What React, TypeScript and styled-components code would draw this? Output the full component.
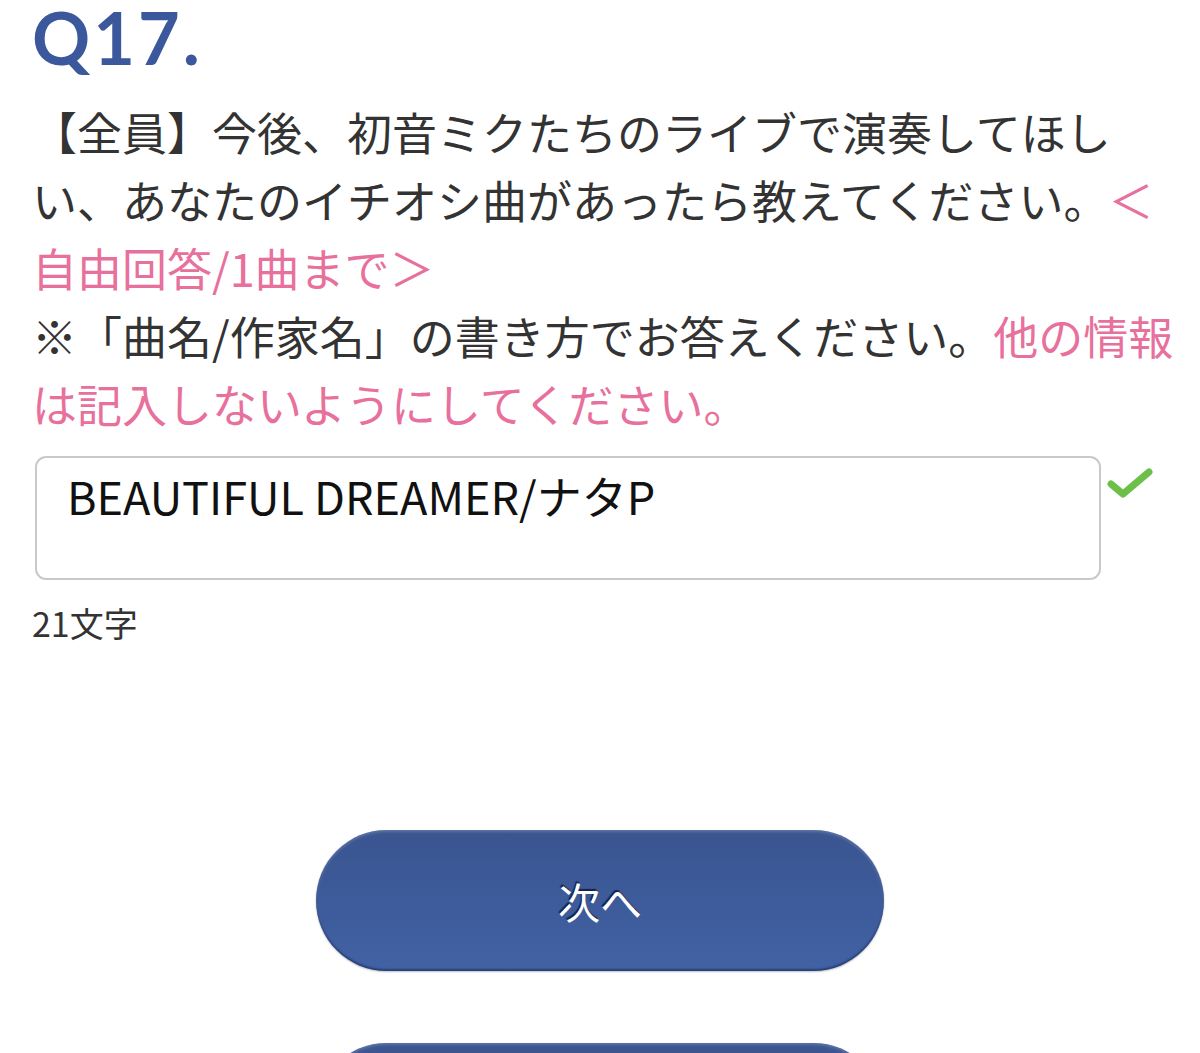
import React from 'react';
import styled, { createGlobalStyle } from 'styled-components';

const GlobalStyle = createGlobalStyle`
    html, body {
        margin: 0;
        padding: 0;
        background: #ffffff;
    }
    body {
        font-family: "Noto Sans CJK JP", "Noto Sans", sans-serif;
        color: #333333;
    }
`;

const Page = styled.div`
    width: 1200px;
    height: 1053px;
    overflow: hidden;
    box-sizing: border-box;
    padding: 0 8px 0 32px;
`;

const QuestionNo = styled.h1`
    margin: 0;
    padding-top: 0;
    height: 88px;
    font-family: Lato, "Open Sans", sans-serif;
    font-weight: 700;
    font-size: 72px;
    line-height: 74px;
    color: #3a589b;
    letter-spacing: 3px;
`;

const Question = styled.p`
    margin: 10px 0 0;
    font-size: 45px;
    line-height: 68px;
    font-weight: 400;
    color: #333333;
    line-break: strict;
`;

const Accent = styled.span`
    color: #e8709c;
`;

const AnswerRow = styled.div`
    display: flex;
    align-items: flex-start;
    margin-top: 18px;
    padding-left: 3px;
`;

const AnswerBox = styled.textarea`
    box-sizing: border-box;
    width: 1066px;
    height: 124px;
    border: 2px solid #c9c9c9;
    border-radius: 11px;
    padding: 12px 30px;
    font-family: "Noto Sans CJK JP", "Noto Sans", sans-serif;
    font-size: 45px;
    line-height: 52px;
    color: #111111;
    resize: none;
    outline: none;
    background: #fff;
`;

const CheckMark = styled.svg`
    width: 46px;
    height: 36px;
    margin: 10px 0 0 6px;
`;

const Counter = styled.div`
    margin-top: 22px;
    font-size: 34px;
    line-height: 42px;
    color: #333333;
`;

const Actions = styled.div`
    display: flex;
    flex-direction: column;
    align-items: center;
    gap: 72px;
    margin-top: 186px;
    margin-left: -32px;
    margin-right: -8px;
`;

const NavButton = styled.button`
    width: 568px;
    height: 141px;
    border: none;
    border-radius: 71px;
    background: linear-gradient(180deg, #3a5590 0%, #3e5c9c 60%, #4262a3 100%);
    box-shadow: inset 0 -2px 2px rgba(20, 35, 80, 0.55), inset 0 2px 3px rgba(255, 255, 255, 0.18), 0 1px 2px rgba(0, 0, 0, 0.25);
    color: #ffffff;
    font-family: "Noto Sans CJK JP", "Noto Sans", sans-serif;
    font-size: 42px;
    text-shadow: -1px -2px 1px rgba(10, 20, 50, 0.8);
    cursor: pointer;
    flex-shrink: 0;
`;

export default function App() {
    return (
        <>
            <GlobalStyle />
            <Page>
                <QuestionNo>Q17.</QuestionNo>
                <Question>
                    【全員】今後、初音ミクたちのライブで演奏してほしい、あなたのイチオシ曲があったら教えてください。<Accent>＜自由回答/1曲まで＞</Accent>
                    <br />
                    ※「曲名/作家名」の書き方でお答えください。<Accent>他の情報は記入しないようにしてください。</Accent>
                </Question>
                <AnswerRow>
                    <AnswerBox readOnly value="BEAUTIFUL DREAMER/ナタP" />
                    <CheckMark viewBox="0 0 46 36">
                        <path d="M4 18 L16 28 L42 6" fill="none" stroke="#6cc04a" strokeWidth="7" strokeLinecap="round" strokeLinejoin="round" />
                    </CheckMark>
                </AnswerRow>
                <Counter>21文字</Counter>
                <Actions>
                    <NavButton>次へ</NavButton>
                    <NavButton aria-label="戻る" />
                </Actions>
            </Page>
        </>
    );
}
